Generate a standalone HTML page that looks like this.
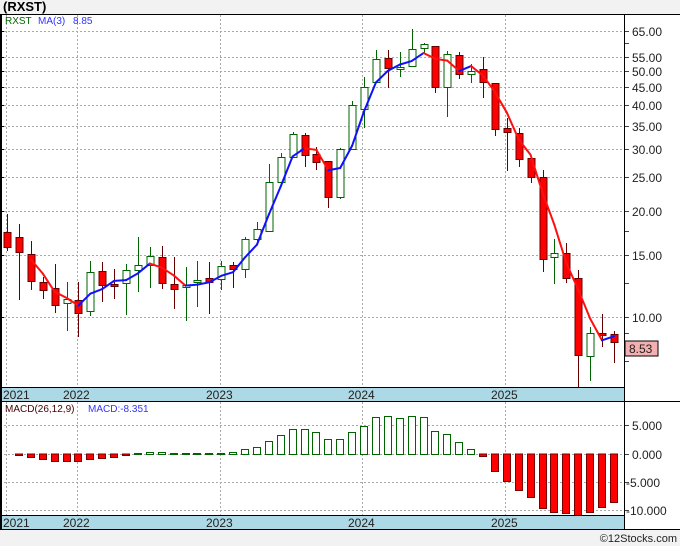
<!DOCTYPE html>
<html><head><meta charset="utf-8"><style>
html,body{margin:0;padding:0;background:#f2f2f2;}
svg{display:block;font-family:"Liberation Sans","DejaVu Sans",sans-serif;}
</style></head><body>
<svg id="s" width="680" height="546" xmlns="http://www.w3.org/2000/svg">
<rect x="0" y="0" width="680" height="546" fill="#f2f2f2"/>
<rect x="0" y="14" width="680" height="516" fill="#fff"/>
<text x="3" y="11" font-size="13" font-weight="bold" fill="#000">(RXST)</text>
<g id="grid"></g>
<g id="c"></g>
<rect x="0" y="387" width="624" height="14" fill="#add8e6"/>
<rect x="0" y="515" width="624" height="15" fill="#add8e6"/>
<line x1="0" y1="387.5" x2="624" y2="387.5" stroke="#000"/>
<line x1="0" y1="401.5" x2="680" y2="401.5" stroke="#000"/>
<line x1="0" y1="515.5" x2="624" y2="515.5" stroke="#000"/>
<line x1="0" y1="529.5" x2="680" y2="529.5" stroke="#000"/>
<line x1="0" y1="14.5" x2="680" y2="14.5" stroke="#000"/>
<line x1="1" y1="14" x2="1" y2="530" stroke="#000" stroke-width="2"/>
<line x1="624.5" y1="14" x2="624.5" y2="530" stroke="#000"/>
<g font-size="12" fill="#222">
<text x="3" y="399">2021</text><text x="63" y="399">2022</text><text x="206" y="399">2023</text><text x="348" y="399">2024</text><text x="491" y="399">2025</text>
<text x="3" y="527">2021</text><text x="63" y="527">2022</text><text x="206" y="527">2023</text><text x="348" y="527">2024</text><text x="491" y="527">2025</text>
</g>
<text x="5" y="24" font-size="10" fill="#006400">RXST</text>
<text x="38" y="24" font-size="10" fill="#3333ff">MA(3)</text>
<text x="73" y="24" font-size="10" fill="#3333ff">8.85</text>
<text x="5" y="412" font-size="10" fill="#400">MACD(26,12,9)</text>
<text x="88" y="412" font-size="10" fill="#3333ff">MACD:-8.351</text>
<g id="ax" font-size="12" fill="#222"></g>
<rect x="625" y="341" width="33" height="15" fill="#f4b0b0" stroke="#000"/>
<text x="629" y="353" font-size="12" fill="#222">8.53</text>
<text x="677" y="542" font-size="11" fill="#222" text-anchor="end">©12Stocks.com</text>
</svg>
<script>
var S="http://www.w3.org/2000/svg";
function el(p,t,a){var e=document.createElementNS(S,t);for(var k in a)e.setAttribute(k,a[k]);p.appendChild(e);return e;}
var g=document.getElementById('grid'),c=document.getElementById('c'),ax=document.getElementById('ax');
function py(p){return 317-152.8*Math.log(p/10);}
var lv=[65,55,50,45,40,35,30,25,20,15,10];
lv.forEach(function(p){var y=Math.round(py(p))+.5;el(g,'line',{x1:0,y1:y,x2:624,y2:y,stroke:'#aaa','stroke-dasharray':'2,2'});el(g,'line',{x1:624,y1:y,x2:629,y2:y,stroke:'#444'});el(g,'line',{x1:0,y1:y,x2:4,y2:y,stroke:'#000'});var t=el(ax,'text',{x:632,y:y+4.5});t.textContent=p.toFixed(2);});
[60,17.5,12.5,9,8,7.5].forEach(function(p){var y=Math.round(py(p))+.5;el(g,'line',{x1:624,y1:y,x2:629,y2:y,stroke:'#444'});});
[[425,'5.000'],[454,'0.000'],[482,'-5.000'],[510,'-10.000']].forEach(function(a){var y=a[0]+.5;el(g,'line',{x1:0,y1:y,x2:624,y2:y,stroke:'#aaa','stroke-dasharray':'2,2'});el(g,'line',{x1:624,y1:y,x2:629,y2:y,stroke:'#444'});var t=el(ax,'text',{x:a[1][0]=='-'?626:632,y:y+4.5});t.textContent=a[1];});
[6,77,220,362,505].forEach(function(x){el(g,'line',{x1:x+.5,y1:15,x2:x+.5,y2:387,stroke:'#aaa','stroke-dasharray':'2,2'});el(g,'line',{x1:x+.5,y1:402,x2:x+.5,y2:515,stroke:'#aaa','stroke-dasharray':'2,2'});});
// [bodyTop, bodyBot, wickTop, wickBot, green?]
var C=[[232,247,214,251,0],[237,252,224,300,0],[254,281,241,290,0],[282,290,277,299,0],[288,305,264,313,0],[299,303,282,331,1],[300,313,282,337,0],[272,311,261,316,1],[271,285,262,302,0],[284,286,269,299,0],[270,283,264,315,1],[265,270,237,292,1],[256,265,247,288,1],[257,283,246,289,0],[284,289,257,309,0],[285,286,267,321,1],[280,282,261,307,1],[278,282,262,314,0],[266,279,261,290,1],[265,269,262,288,0],[239,269,237,278,1],[229,239,222,241,1],[182,231,164,231,1],[157,182,153,182,1],[134,157,132,157,1],[135,155,133,167,0],[154,162,147,170,0],[161,197,161,208,0],[149,197,148,199,1],[105,149,101,149,1],[87,109,77,128,1],[59,82,50,82,1],[58,68,50,88,0],[67,69,52,77,1],[49,66,29,66,1],[44,48,43,53,1],[46,87,46,93,0],[54,87,51,117,1],[55,74,52,79,0],[71,74,64,83,1],[69,82,57,98,0],[83,129,83,136,0],[128,132,118,171,0],[133,159,128,167,0],[158,177,158,183,0],[177,259,170,272,0],[253,257,239,284,1],[253,278,243,283,0],[278,355,270,387,0],[333,356,327,381,1],[333,334,314,347,0],[334,342,331,363,0]];
var M=[454,454,457,459,461,461,461,459,458,457,455,453,452,452,453,453,453,453,453,452,449,447,441,435,429,429,432,439,439,432,426,417,416,418,416,417,431,434,442,449,456,471,481,490,497,508,512,513,515,512,507,502];
function X(i){return 7+11.9*i;}
// MACD
M.forEach(function(v,i){if(i==0)return;var x=Math.round(X(i))-3.5;var gr=v<=454&&i>=11&&i<40;if(gr){var h=Math.max(454-v,1);el(c,'rect',{x:x,y:v+.5,width:7,height:h,fill:'#fff',stroke:'#006400'});}else{var h=Math.max(v-454,1);el(c,'rect',{x:x,y:454,width:7,height:h+.5,fill:'#f00',stroke:'#700'});}});
// candles
var cl=[];
C.forEach(function(d,i){var x=Math.round(X(i))+.5;var gr=d[4];el(c,'line',{x1:x,y1:d[2],x2:x,y2:d[3],stroke:gr?'#006400':'#600'});var h=Math.max(d[1]-d[0],2);el(c,'rect',{x:x-3.5,y:d[0]+.5,width:7,height:h,fill:gr?'#fff':'#f00',stroke:gr?'#006400':'#600'});cl.push(gr?d[0]:d[1]);});
// MA(3)
function ip(y){return 10*Math.exp((317-y)/152.8);}
var ma=[];for(var i=2;i<cl.length;i++){ma.push([X(i),py((ip(cl[i])+ip(cl[i-1])+ip(cl[i-2]))/3)]);}
for(var j=1;j<ma.length;j++){var up=ma[j][1]<ma[j-1][1];el(c,'line',{x1:ma[j-1][0],y1:ma[j-1][1],x2:ma[j][0],y2:ma[j][1],stroke:up?'#1010ff':'#ff1010','stroke-width':2,'stroke-linecap':'round'});}
</script>
</body></html>
